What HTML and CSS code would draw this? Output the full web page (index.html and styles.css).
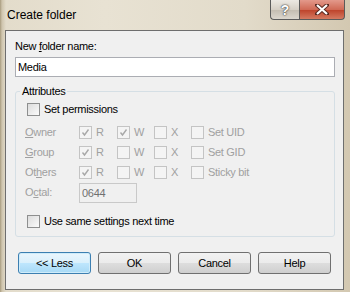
FILE: index.html
```html
<!DOCTYPE html>
<html>
<head>
<meta charset="utf-8">
<title>Create folder</title>
<link rel="stylesheet" href="styles.css">
</head>
<body>
<div class="window">
  <div class="titlebar">
    <span class="title">Create folder</span>
    <div class="caption">
      <div class="capbtn help">?</div>
      <div class="capbtn close">
        <svg width="14" height="11" viewBox="0 0 14 11"><path d="M2 1 L12 10 M12 1 L2 10" stroke="#5a2a22" stroke-width="4" stroke-linecap="square"/><path d="M2 1 L12 10 M12 1 L2 10" stroke="#fff" stroke-width="2.2"/></svg>
      </div>
    </div>
  </div>

  <div class="client">
    <div class="label">New <u>f</u>older name:</div>
    <div class="textbox">Media</div>

    <fieldset class="group">
      <legend>Attributes</legend>
      <div class="check"><span class="box"></span>Set permissions</div>

      <div class="perms">
        <span class="name"><u>O</u>wner</span>
        <span class="check dis"><span class="box"><svg width="9" height="9" viewBox="0 0 9 9"><path d="M1.5 4.5 L3.5 7 L7.5 1.5" /></svg></span>R</span>
        <span class="check dis"><span class="box"><svg width="9" height="9" viewBox="0 0 9 9"><path d="M1.5 4.5 L3.5 7 L7.5 1.5" /></svg></span>W</span>
        <span class="check dis"><span class="box"></span>X</span>
        <span class="check dis"><span class="box"></span>Set UID</span>

        <span class="name"><u>G</u>roup</span>
        <span class="check dis"><span class="box"><svg width="9" height="9" viewBox="0 0 9 9"><path d="M1.5 4.5 L3.5 7 L7.5 1.5" /></svg></span>R</span>
        <span class="check dis"><span class="box"></span>W</span>
        <span class="check dis"><span class="box"></span>X</span>
        <span class="check dis"><span class="box"></span>Set GID</span>

        <span class="name">Ot<u>h</u>ers</span>
        <span class="check dis"><span class="box"><svg width="9" height="9" viewBox="0 0 9 9"><path d="M1.5 4.5 L3.5 7 L7.5 1.5" /></svg></span>R</span>
        <span class="check dis"><span class="box"></span>W</span>
        <span class="check dis"><span class="box"></span>X</span>
        <span class="check dis"><span class="box"></span>Sticky bit</span>

        <span class="name">O<u>c</u>tal:</span>
        <span class="octal">0644</span>
      </div>

      <div class="check last"><span class="box"></span>Use same settings next time</div>
    </fieldset>

    <div class="buttons">
      <div class="btn default">&lt;&lt; Less</div>
      <div class="btn">OK</div>
      <div class="btn">Cancel</div>
      <div class="btn">Help</div>
    </div>
  </div>
</div>
</body>
</html>
```

FILE: styles.css
```css
body {
  margin: 0;
  width: 350px;
  height: 292px;
  overflow: hidden;
  font-family: "Liberation Sans", Arial, sans-serif;
  font-size: 11px;
  letter-spacing: -0.3px;
  color: #000;
}

/* Aero glass frame */
.window {
  height: 292px;
  box-sizing: border-box;
  padding: 0 6px 0 5px;
  background: linear-gradient(90deg, #a89b7e 0px, #cfc5ae 2px, #e3dccb 6px, #e8e2d3 30%, #e2dbca 70%, #d3c8b1 100%);
}

.titlebar {
  height: 30px;
  display: flex;
  justify-content: space-between;
  align-items: flex-start;
}

.title {
  font-size: 12px;
  letter-spacing: 0;
  margin: 8px 0 0 2px;
}

.caption {
  display: flex;
  margin-right: -1px;
}

.capbtn {
  height: 20px;
  border: 1px solid #5b5b5b;
  border-top: none;
  display: flex;
  align-items: center;
  justify-content: center;
  box-sizing: border-box;
}

.help {
  width: 29px;
  border-right: none;
  border-radius: 0 0 0 4px;
  background: linear-gradient(#ece9e3, #d6d0c6 50%, #c3bcb0 51%, #dcd7ce);
  color: #fff;
  font-weight: bold;
  font-size: 14px;
  text-shadow: 0 0 2px #333, 0 0 1px #333;
}

.close {
  width: 46px;
  border-radius: 0 0 4px 0;
  background: linear-gradient(#e3998b, #d06a56 50%, #bd4129 51%, #d57a61);
}

.client {
  height: 260px;
  box-sizing: border-box;
  background: #f0f0f0;
  border: 1px solid #6e6e6e;
  padding: 8px 8px 0 9px;
}

.label {
  line-height: 14px;
}

.textbox {
  margin-top: 4px;
  height: 20px;
  box-sizing: border-box;
  border: 1px solid #abadb3;
  background: #fff;
  padding: 0 2px;
  line-height: 18px;
}

.group {
  margin: 7px 0 0 0;
  padding: 3px 0 0 11px;
  height: 153px;
  box-sizing: border-box;
  border: 1px solid #d5dfe5;
  border-radius: 3px;
}

.group legend {
  padding: 0 2px;
  margin-left: -7px;
  line-height: 14px;
}

.check {
  display: flex;
  align-items: center;
  height: 16px;
}

.box {
  width: 11px;
  height: 11px;
  border: 1px solid #8e8f8f;
  background: linear-gradient(135deg, #dcdcdc, #fbfbfb);
  margin-right: 4px;
  display: inline-flex;
  align-items: center;
  justify-content: center;
  flex: none;
}

.box svg path {
  fill: none;
  stroke: #a8a8a8;
  stroke-width: 1.4;
}

.dis {
  color: #a0a0a0;
}

.dis .box {
  border-color: #c4c4c4;
  background: #f4f4f4;
}

.perms {
  display: grid;
  grid-template-columns: 54px 38px 37px 37px auto;
  grid-auto-rows: 20px;
  align-items: center;
  margin: 5px 0 0 -2px;
}

.name {
  color: #a0a0a0;
}

.octal {
  grid-column: 2 / 4;
  width: 58px;
  height: 20px;
  box-sizing: border-box;
  border: 1px solid #c9c9c9;
  color: #707070;
  padding: 0 2px;
  line-height: 18px;
  margin-top: 2px;
}

.last {
  margin-top: 11px;
}

.buttons {
  display: flex;
  gap: 7px;
  margin: 15px 0 0 3px;
}

.btn {
  width: 73px;
  height: 22px;
  box-sizing: border-box;
  border: 1px solid #707070;
  border-radius: 3px;
  background: linear-gradient(#f2f2f2, #ebebeb 50%, #dddddd 51%, #cfcfcf);
  display: flex;
  align-items: center;
  justify-content: center;
}

.default {
  border-color: #3c7fb1;
  background: linear-gradient(#eaf6fd, #d9f0fc 50%, #bee6fd 51%, #a7d9f5);
  box-shadow: inset 0 0 0 1px #cfecfa;
}
```
